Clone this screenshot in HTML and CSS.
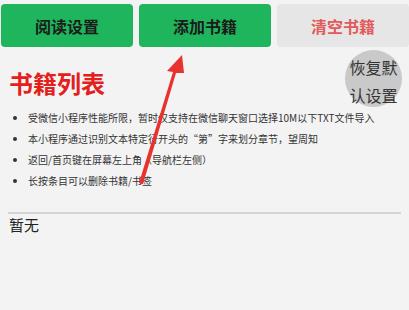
FILE: index.html
```html
<!DOCTYPE html>
<html lang="zh">
<head>
<meta charset="utf-8">
<link rel="stylesheet" href="styles.css">
</head>
<body>
<div class="page">
  <div class="toolbar">
    <div class="btn btn-green">阅读设置</div>
    <div class="btn btn-green">添加书籍</div>
    <div class="btn btn-gray">清空书籍</div>
  </div>
  <div class="head">
    <h1 class="title">书籍列表</h1>
    <div class="reset">恢复默认设置</div>
  </div>
  <ul class="tips">
    <li>受微信小程序性能所限，暂时仅支持在微信聊天窗口选择10M以下TXT文件导入</li>
    <li>本小程序通过识别文本特定行开头的“第”字来划分章节，望周知</li>
    <li>返回/首页键在屏幕左上角（导航栏左侧）</li>
    <li>长按条目可以删除书籍/书签</li>
  </ul>
  <div class="divider"></div>
  <div class="empty">暂无</div>
  <svg class="arrow" width="409" height="310" viewBox="0 0 409 310">
    <polygon points="141,184 143,184 176,73 184,73 182,55 167,71 173,72 139,183" fill="#e8322e"/>
  </svg>
</div>
</body>
</html>
```

FILE: styles.css
```css
html, body {
  margin: 0;
  padding: 0;
  background: #f3f3f3;
}
.page {
  position: relative;
  width: 409px;
  height: 310px;
  overflow: hidden;
  font-family: "Noto Sans CJK SC", "Liberation Sans", sans-serif;
  color: #222;
}
.toolbar {
  display: flex;
  gap: 6px;
  padding: 4px 0 0 1px;
}
.btn {
  width: 132px;
  height: 43px;
  border-radius: 4px;
  display: flex;
  align-items: center;
  justify-content: center;
  font-size: 16px;
  font-weight: 700;
}
.btn-green {
  background: #1fb55c;
  color: #1b1b1b;
}
.btn-gray {
  background: #e6e6e6;
  color: #e25a5a;
}
.head {
  display: flex;
  justify-content: space-between;
  padding: 3px 7px 0 9px;
}
.title {
  margin: 19px 0 0 0;
  font-size: 24px;
  line-height: 28px;
  font-weight: 700;
  color: #e3201c;
}
.reset {
  width: 57px;
  height: 57px;
  border-radius: 50%;
  background: #c9c9c9;
  box-sizing: border-box;
  padding: 3px 4px 0 4px;
  font-size: 16px;
  line-height: 28px;
  color: #333;
  text-align: center;
}
.tips {
  margin: 0;
  padding: 0 0 0 28px;
  font-size: 10px;
  line-height: 21px;
  color: #333;
}
.divider {
  margin: 21px 8px 0 8px;
  height: 2px;
  background: #d4d4d4;
}
.empty {
  padding: 1px 0 0 9px;
  font-size: 15px;
  line-height: 20px;
  color: #222;
}
.arrow {
  position: absolute;
  left: 0;
  top: 0;
  pointer-events: none;
}
```
